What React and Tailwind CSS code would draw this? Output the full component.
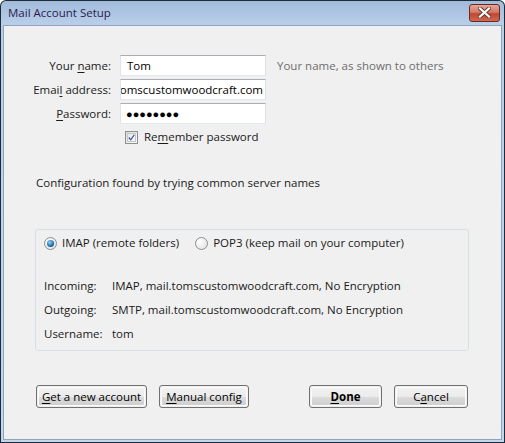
import React from "react";

const font = { fontFamily: '"Segoe UI", "Open Sans", "Noto Sans", sans-serif' };

function U({ children }) {
  return <span className="underline underline-offset-[2px] decoration-1">{children}</span>;
}

function Btn({ children, w, bold }) {
  return (
    <div
      className={`h-[23px] ${w} rounded-[3px] border border-[#707070] p-px ${bold ? "font-bold" : ""}`}
    >
      <div className="h-full w-full rounded-[2px] border border-[#fcfcfc] bg-[linear-gradient(#f2f2f2_0%,#ebebeb_50%,#dddddd_50%,#cfcfcf_100%)] flex items-center justify-center text-[11.5px] text-black leading-none">
        {children}
      </div>
    </div>
  );
}

function Input({ children, right }) {
  return (
    <div
      className={`h-[21px] w-[146px] bg-white border border-[#abadb3] border-b-[#e3e9ef] border-l-[#e2e3ea] border-r-[#dbdfe6] flex items-center overflow-hidden whitespace-nowrap text-[11.5px] text-black ${
        right ? "justify-end pr-[2px]" : "pl-[6px]"
      }`}
    >
      {children}
    </div>
  );
}

function Radio({ checked }) {
  return (
    <div className="w-[13px] h-[13px] rounded-full border border-[#8e8f8f] bg-[radial-gradient(circle_at_35%_35%,#ffffff,#dcdcdc)] flex items-center justify-center">
      {checked && (
        <div className="w-[7px] h-[7px] rounded-full bg-[radial-gradient(circle_at_40%_35%,#9cd4f5,#1c6bb0_60%,#0d3f73)]" />
      )}
    </div>
  );
}

export default function App() {
  return (
    <div
      className="w-[505px] h-[443px] bg-[#1e2a38] rounded-t-[6px] p-px overflow-hidden"
      style={font}
    >
      <div className="w-full h-full rounded-t-[5px] bg-[linear-gradient(#a1bbdb_0px,#b9cfe9_24px,#c2d6ed_100%)] flex flex-col">
        {/* Title bar */}
        <div className="h-[24px] flex items-center pl-[7px] pr-[4px]">
          <span className="text-[11.5px] text-[#2c1a4f] leading-none">Mail Account Setup</span>
          <div className="ml-auto mt-[-1px] w-[31px] h-[18px] rounded-[3px] border border-[#6a2a20] bg-[linear-gradient(#e7a597_0%,#d37a68_45%,#c2462f_55%,#d06a52_100%)] flex items-center justify-center">
            <svg width="13" height="11" viewBox="0 0 13 11">
              <path
                d="M2 1.5 L11 9.5 M11 1.5 L2 9.5"
                stroke="#6a3a30"
                strokeWidth="4"
                strokeLinecap="square"
              />
              <path
                d="M2 1.5 L11 9.5 M11 1.5 L2 9.5"
                stroke="#ffffff"
                strokeWidth="2.2"
                strokeLinecap="square"
              />
            </svg>
          </div>
        </div>
        {/* Client */}
        <div className="flex-1 mx-[2px] mb-[2px] border border-[#8ea4bd] bg-[#f0f0f0] flex flex-col text-[11.5px] leading-[18px] text-[#1a1a1a]">
          <div className="mt-[29px] flex flex-col gap-[3px]">
            <div className="flex items-center">
              <div className="w-[107px] text-right">
                Your <U>n</U>ame:
              </div>
              <div className="ml-[9px]">
                <Input>Tom</Input>
              </div>
              <div className="ml-[11px] text-[#6d6d6d]">Your name, as shown to others</div>
            </div>
            <div className="flex items-center">
              <div className="w-[107px] text-right">
                Emai<U>l</U> address:
              </div>
              <div className="ml-[9px]">
                <Input right>omscustomwoodcraft.com</Input>
              </div>
            </div>
            <div className="flex items-center">
              <div className="w-[107px] text-right">
                <U>P</U>assword:
              </div>
              <div className="ml-[9px]">
                <Input>
                  <span className="text-[11px] -ml-[1px] font-bold">●●●●●●●●</span>
                </Input>
              </div>
            </div>
          </div>
          <div className="mt-[4px] ml-[121px] flex items-center">
            <div className="w-[13px] h-[13px] border border-[#8e8f8f] bg-[linear-gradient(135deg,#dcdcdc,#ffffff)] p-px">
              <div className="w-full h-full border border-[#c6c6c6] bg-[linear-gradient(135deg,#e8e8e8,#fbfbfb)] flex items-center justify-center">
                <svg width="9" height="9" viewBox="0 0 9 9">
                  <path d="M1 4.5 L3.5 7.5 L8 1" fill="none" stroke="#3c5a9a" strokeWidth="1.6" />
                </svg>
              </div>
            </div>
            <div className="ml-[6px]">
              Re<U>m</U>ember password
            </div>
          </div>
          <div className="mt-[28px] ml-[32px]">Configuration found by trying common server names</div>
          <div className="mt-[37px] ml-[31px] w-[434px] h-[122px] border border-[#d5dfe5] rounded-[3px] flex flex-col">
            <div className="mt-[4px] ml-[8px] flex items-center">
              <Radio checked />
              <span className="ml-[5px]">IMAP (remote folders)</span>
              <div className="ml-[16px]">
                <Radio />
              </div>
              <span className="ml-[5px]">POP3 (keep mail on your computer)</span>
            </div>
            <div className="mt-[25px] ml-[8px] grid grid-cols-[68px_1fr] gap-y-[7px] leading-[17px]">
              <span>Incoming:</span>
              <span>IMAP, mail.tomscustomwoodcraft.com, No Encryption</span>
              <span>Outgoing:</span>
              <span>SMTP, mail.tomscustomwoodcraft.com, No Encryption</span>
              <span>Username:</span>
              <span>tom</span>
            </div>
          </div>
          <div className="mt-[34px] ml-[32px] mr-[33px] flex">
            <Btn w="w-[111px]">
              <span>
                <U>G</U>et a new account
              </span>
            </Btn>
            <div className="ml-[12px]">
              <Btn w="w-[90px]">
                <span>
                  <U>M</U>anual config
                </span>
              </Btn>
            </div>
            <div className="ml-auto">
              <Btn w="w-[73px]" bold>
                <span>
                  <U>D</U>one
                </span>
              </Btn>
            </div>
            <div className="ml-[12px]">
              <Btn w="w-[74px]">
                <span>
                  C<U>a</U>ncel
                </span>
              </Btn>
            </div>
          </div>
        </div>
      </div>
    </div>
  );
}
